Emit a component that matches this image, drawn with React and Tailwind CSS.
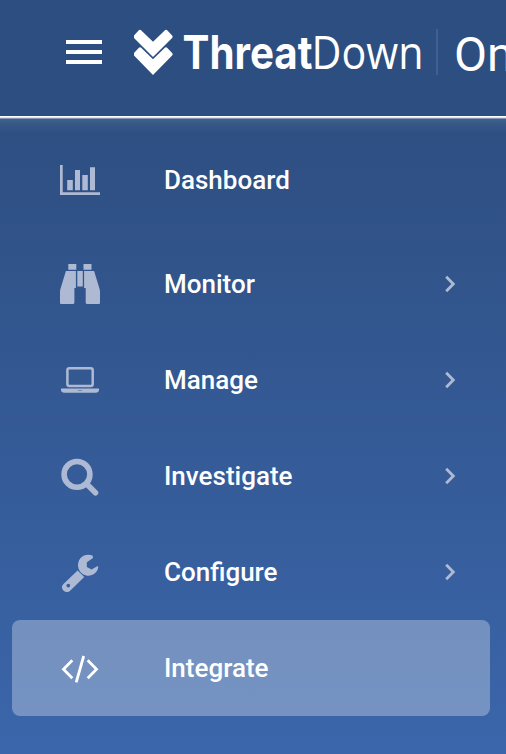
import React from "react";

const Icon = ({ children }) => (
  <svg width="40" height="42" viewBox="0 0 40 42" fill="currentColor" className="shrink-0">
    {children}
  </svg>
);

const ChartIcon = () => (
  <Icon>
    <path d="M0 6h2.700v27.300H40V36H0z" />
    <path d="M7.200 21h5.600v10.200H7.200zM15 11h5v20.200h-5zM22.300 16h5.500v15.200h-5.500zM30 8.300h5v22.900h-5z" />
  </Icon>
);

const BinocularsIcon = () => (
  <Icon>
    <path d="M8.300 1h8v5.800h-8zM23.500 1h8v5.800h-8zM17.300 8h5.500v15.500h-5.500z" />
    <path d="M5.900 8h10v17h-1.500v14.500c0 .9-.5 1.500-1.400 1.500H1.300C.5 41 0 40.500 0 39.500V29c0-1.500.2-2.500.7-4zM24.100 8h10l5.200 17c.5 1.500.7 2.500.7 4v10.500c0 1-.5 1.500-1.300 1.500H27.100c-.9 0-1.400-.6-1.400-1.500V25h-1.600z" />
  </Icon>
);

const LaptopIcon = () => (
  <Icon>
    <rect x="7.400" y="9.300" width="25.300" height="17.700" rx="2" fill="none" stroke="currentColor" strokeWidth="2.500" />
    <path fillRule="evenodd" d="M1 29.500h38v1.800c0 1.500-1.500 2.500-3.200 2.500H4.200C2.500 33.800 1 32.800 1 31.300zm17 1.400v.7h4v-.7z" />
  </Icon>
);

const SearchIcon = () => (
  <Icon>
    <g fill="none" stroke="currentColor" strokeWidth="5.600">
      <circle cx="17" cy="19.400" r="12.900" />
      <path d="M26.500 28.800l9 8.900" strokeLinecap="round" />
    </g>
  </Icon>
);

const WrenchIcon = () => (
  <Icon>
    <path fillRule="evenodd" d="M17.600 19.500l6.600 6.500L10.400 39.500c-2.200 2.100-4.800 2-6.800.2-2.200-2.200-2.200-4.800-.1-6.800zM8.300 32.700a1.900 1.900 0 1 0 0 3.800 1.900 1.900 0 0 0 0-3.800z" />
    <path d="M32.600 4.500c-4.700-1.700-9.200-.5-12 2.500-2.500 2.800-3.200 6.700-2.100 10.600 1.100 3.700 4.800 6.700 8.600 7.100 5.500.6 10.600-3.300 11.200-8.600l-.6-1.200-6.200 3.700-4.700-2.600v-4.800l6.200-4.200z" />
  </Icon>
);

const CodeIcon = () => (
  <Icon>
    <path d="M12.300 13.200L3.500 22.200l8.800 9M27.700 13.200l8.800 9-8.800 9M23.700 9l-7.500 26.300" fill="none" stroke="currentColor" strokeWidth="2.800" />
  </Icon>
);

const items = [
  { label: "Dashboard", icon: ChartIcon },
  { label: "Monitor", icon: BinocularsIcon, nested: true },
  { label: "Manage", icon: LaptopIcon, nested: true },
  { label: "Investigate", icon: SearchIcon, nested: true },
  { label: "Configure", icon: WrenchIcon, nested: true },
  { label: "Integrate", icon: CodeIcon, active: true },
];

function NavItem({ label, icon: Glyph, nested, active }) {
  return (
    <a
      className={`flex h-24 shrink-0 items-center rounded-lg pl-12 pr-[34px] text-white first:mb-2 ${
        active ? "bg-white/30" : ""
      }`}
    >
      <span className={active ? "text-white" : "text-[#aebad3]"}>
        <Glyph />
      </span>
      <span className="ml-16 flex-1 text-[26px] leading-8 font-medium">{label}</span>
      {nested && (
        <svg width="12" height="18" viewBox="0 0 12 18" className="text-[#aebad3]">
          <path d="M2.200 1.800L9.300 9l-7.100 7.200" fill="none" stroke="currentColor" strokeWidth="2.800" />
        </svg>
      )}
    </a>
  );
}

function Logo() {
  return (
    <svg width="290" height="60" viewBox="0 0 290 60" className="ml-8 shrink-0" fill="white" aria-label="ThreatDown">
      <path d="M6.800 2L19 13.700 31.200 2q1-.7 2 .2l4.900 5.300q1.200 1.300 0 2.500L19 29 0 10q-1.200-1.200 0-2.500L4.800 2.200q1-.9 2-.2z" />
      <path d="M6.900 19.600L19 31.200l12.100-11.600q1-.8 2 .2l5 5.300q1.100 1.200 0 2.400L19 47 0 27.500q-1.100-1.200 0-2.400l4.900-5.300q1-1 2-.2z" />
      <text x="48.500" y="41" fontSize="46" fontWeight="700" textLength="130" lengthAdjust="spacingAndGlyphs" className="font-['Inter',sans-serif]">Threat</text>
      <text x="177.500" y="41" fontSize="46" fontWeight="400" textLength="112" lengthAdjust="spacingAndGlyphs" className="font-['Open_Sans',sans-serif]">Down</text>
    </svg>
  );
}

export default function App() {
  return (
    <div className="flex h-[754px] w-[506px] flex-col overflow-hidden bg-[#2c4e80] font-[Roboto,sans-serif] text-white">
      <header className="flex h-[116px] shrink-0 items-start overflow-hidden pt-7 pl-[66px]">
        <button className="mt-3 flex w-9 shrink-0 flex-col gap-1.5" aria-label="Menu">
          <span className="h-1 bg-white" />
          <span className="h-1 bg-white" />
          <span className="h-1 bg-white" />
        </button>
        <Logo />
        <span className="ml-3 mt-px h-[46px] w-0.5 shrink-0 bg-[#41608e]" />
        <span className="-mt-px ml-4 shrink-0 text-[48px] leading-[56px]">On</span>
      </header>
      <div className="h-px shrink-0 bg-white" />
      <div className="h-px shrink-0 bg-[#dfe4ec]" />
      <div className="h-px shrink-0 bg-[#8496b4]" />
      <nav className="flex flex-1 flex-col bg-[linear-gradient(to_bottom,#40608d_0px,#365787_6px,#2e4f82_14px,#3b66ab_100%)] pt-[13px] pr-4 pl-3">
        {items.map((item) => (
          <NavItem key={item.label} {...item} />
        ))}
      </nav>
    </div>
  );
}
